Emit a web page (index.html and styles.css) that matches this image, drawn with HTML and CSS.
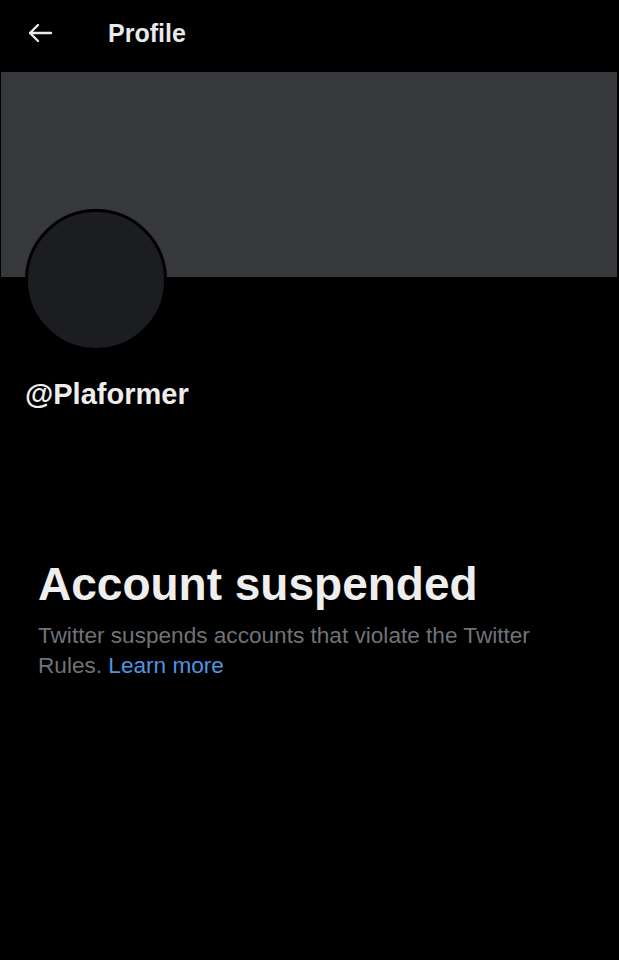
FILE: index.html
```html
<!DOCTYPE html>
<html>
<head>
<meta charset="utf-8">
<link rel="stylesheet" href="styles.css">
</head>
<body>
<div class="page">
  <header class="topbar">
    <svg class="back" width="26" height="22" viewBox="0 0 26 22">
      <path d="M24 11H3M11 3L3 11L11 19" fill="none" stroke="#eaeaea" stroke-width="2.4" stroke-linecap="round" stroke-linejoin="round"/>
    </svg>
    <span class="title">Profile</span>
  </header>
  <div class="banner"></div>
  <div class="avatar-row">
    <div class="avatar"></div>
  </div>
  <div class="handle">@Plaformer</div>
  <section class="suspended">
    <h1 class="heading">Account suspended</h1>
    <p class="desc">Twitter suspends accounts that violate the Twitter Rules. <a class="link" href="#">Learn more</a></p>
  </section>
</div>
</body>
</html>
```
FILE: styles.css
```css
html, body {
  margin: 0;
  padding: 0;
  background: #000;
}
.page {
  width: 619px;
  height: 960px;
  background: #000;
  font-family: "Liberation Sans", Arial, sans-serif;
  color: #e7e9ea;
  overflow: hidden;
}
.topbar {
  height: 72px;
  display: flex;
  align-items: center;
  padding-left: 27px;
  box-sizing: border-box;
  padding-bottom: 6px;
}
.back {
  display: block;
}
.title {
  margin-left: 55px;
  font-size: 25px;
  font-weight: bold;
  color: #e7e9ea;
}
.banner {
  height: 205px;
  margin: 0 2px 0 1px;
  background: #37383c;
}
.avatar-row {
  height: 72px;
  position: relative;
}
.avatar {
  position: absolute;
  left: 25px;
  top: -68px;
  width: 136px;
  height: 136px;
  border-radius: 50%;
  background: #1c1d20;
  border: 3px solid #000;
}
.handle {
  margin-top: 29px;
  padding-left: 25px;
  font-size: 29px;
  font-weight: bold;
  color: #ededed;
}
.suspended {
  padding: 0 40px 0 38px;
  margin-top: 146px;
}
.heading {
  margin: 0;
  font-size: 46px;
  font-weight: bold;
  color: #eeeeef;
  line-height: 54px;
}
.desc {
  margin: 10px 0 0;
  font-size: 22.6px;
  line-height: 30px;
  color: #6f7378;
}
.link {
  color: #4f95e0;
  text-decoration: none;
}
```
